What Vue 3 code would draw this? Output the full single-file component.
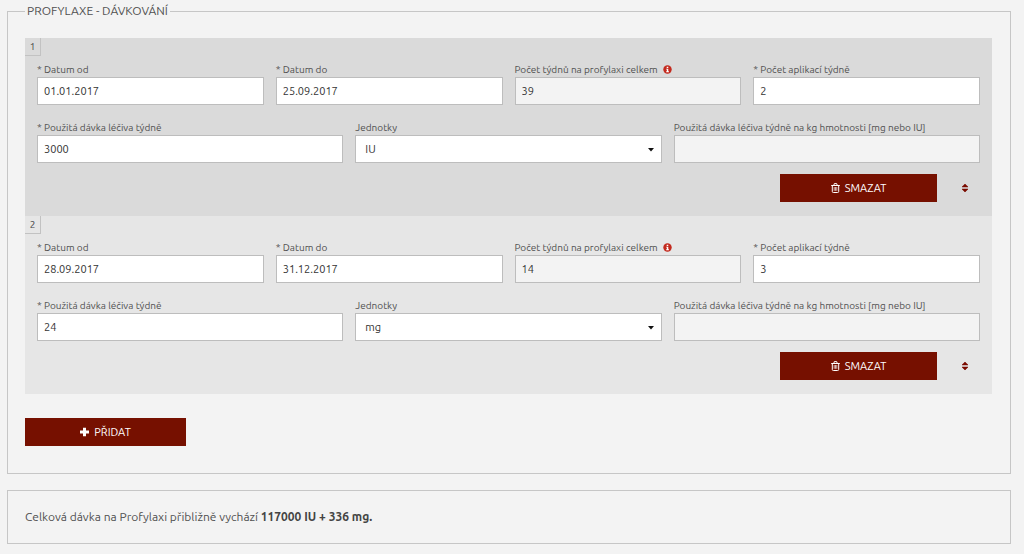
<script setup>
import { ref, computed } from 'vue'

const entries = ref([
  { id: 1, from: '01.01.2017', to: '25.09.2017', weeks: '39', perWeek: '2', dose: '3000', unit: 'IU', perKg: '' },
  { id: 2, from: '28.09.2017', to: '31.12.2017', weeks: '14', perWeek: '3', dose: '24', unit: 'mg', perKg: '' },
])

const total = computed(() =>
  ['IU', 'mg']
    .map((unit) => {
      const sum = entries.value
        .filter((e) => e.unit === unit)
        .reduce((acc, e) => acc + Number(e.weeks) * Number(e.dose), 0)
      return `${sum} ${unit}`
    })
    .join(' + ')
)

function remove(index) {
  entries.value.splice(index, 1)
}

function add() {
  entries.value.push({ id: Date.now(), from: '', to: '', weeks: '', perWeek: '', dose: '', unit: 'IU', perKg: '' })
}
</script>

<template>
  <main class="page">
    <fieldset class="panel">
      <legend>PROFYLAXE - DÁVKOVÁNÍ</legend>

      <section v-for="(entry, i) in entries" :key="entry.id" class="entry">
        <span class="index">{{ i + 1 }}</span>
        <div class="row four">
          <div class="field">
            <label :for="`from-${entry.id}`">* Datum od</label>
            <input :id="`from-${entry.id}`" v-model="entry.from" type="text" />
          </div>
          <div class="field">
            <label :for="`to-${entry.id}`">* Datum do</label>
            <input :id="`to-${entry.id}`" v-model="entry.to" type="text" />
          </div>
          <div class="field">
            <label :for="`weeks-${entry.id}`">
              Počet týdnů na profylaxi celkem
              <svg class="info" viewBox="0 0 16 16" aria-hidden="true">
                <circle cx="8" cy="8" r="7.5" fill="#c32a1e" />
                <path d="M6.6 3h2.8v2.3H6.6zM5.6 6.6h3.8v4.6h1.2v1.6H5.6v-1.6h1.2v-3H5.6z" fill="#fff" />
              </svg>
            </label>
            <input :id="`weeks-${entry.id}`" v-model="entry.weeks" type="text" readonly />
          </div>
          <div class="field">
            <label :for="`per-week-${entry.id}`">* Počet aplikací týdně</label>
            <input :id="`per-week-${entry.id}`" v-model="entry.perWeek" type="text" />
          </div>
        </div>
        <div class="row three">
          <div class="field">
            <label :for="`dose-${entry.id}`">* Použitá dávka léčiva týdně</label>
            <input :id="`dose-${entry.id}`" v-model="entry.dose" type="text" />
          </div>
          <div class="field">
            <label :for="`unit-${entry.id}`">Jednotky</label>
            <div class="select">
              <select :id="`unit-${entry.id}`" v-model="entry.unit">
                <option>IU</option>
                <option>mg</option>
              </select>
              <svg class="caret" viewBox="0 0 6 4" aria-hidden="true"><path d="M0 0h6L3 3.6z" fill="#111" /></svg>
            </div>
          </div>
          <div class="field">
            <label :for="`per-kg-${entry.id}`">Použitá dávka léčiva týdně na kg hmotnosti [mg nebo IU]</label>
            <input :id="`per-kg-${entry.id}`" v-model="entry.perKg" type="text" readonly />
          </div>
        </div>
        <div class="actions">
          <button type="button" class="btn delete" @click="remove(i)">
            <svg class="icon" viewBox="0 0 9 10" aria-hidden="true" fill="none" stroke="#fff">
              <path d="M.2 2.5h8.6M2.8 2.3L3.3.6h2.4l.5 1.7M1.3 2.6v5.9q0 1 1 1h4.4q1 0 1-1V2.6" />
              <path d="M3.2 4v3.8M4.5 4v3.8M5.8 4v3.8" stroke-width=".7" />
            </svg>
            SMAZAT
          </button>
          <button type="button" class="sort" aria-label="Přesunout">
            <svg viewBox="0 0 8 10" aria-hidden="true">
              <path d="M4 1L7 3.9H1zM1 6.1h6L4 9z" fill="#7a0c00" stroke="#7a0c00" stroke-width=".6" stroke-linejoin="round" />
            </svg>
          </button>
        </div>
      </section>

      <button type="button" class="btn add" @click="add">
        <svg class="icon" viewBox="0 0 9 10" aria-hidden="true"><path d="M3 .8h3v2.7h3v3H6v2.7H3V6.5H0v-3h3z" fill="#fff" /></svg>
        PŘIDAT
      </button>
    </fieldset>

    <p class="summary">Celková dávka na Profylaxi přibližně vychází <strong>{{ total }}.</strong></p>
  </main>
</template>

<style>
body {
  background: #f3f3f3;
}
</style>

<style scoped>
.page {
  padding: 3px 13px 9px 7px;
  font-family: Ubuntu, "Noto Sans", sans-serif;
  font-size: 10px;
  line-height: 14px;
  color: #505050;
}

.panel {
  min-width: 0;
  margin: 0;
  padding: 19px 18px 27px 17px;
  border: 1px solid #c6c6c6;
}

legend {
  padding: 0 2px;
  font-size: 12px;
  line-height: 16px;
}

.entry {
  position: relative;
  padding: 25px 12px 14px;
  background: #dadada;
}

.entry:nth-of-type(even) {
  background: #e6e6e6;
}

.index {
  position: absolute;
  top: 0;
  left: 0;
  box-sizing: border-box;
  width: 16px;
  height: 18px;
  border: solid #c2c2c2;
  border-width: 0 1px 1px 0;
  line-height: 18px;
  text-align: center;
  color: #444;
}

.row {
  display: grid;
  gap: 12px;
}

.four {
  grid-template-columns: repeat(4, minmax(0, 1fr));
  margin-bottom: 16px;
}

.three {
  grid-template-columns: repeat(3, minmax(0, 1fr));
}

.field {
  display: flex;
  flex-direction: column;
}

label {
  white-space: nowrap;
}

.info {
  width: 9px;
  height: 9px;
  margin-left: 3px;
  vertical-align: -1px;
}

input,
select {
  box-sizing: border-box;
  width: 100%;
  height: 28px;
  padding: 0 6px;
  border: 1px solid #bdbdbd;
  border-radius: 0;
  background: #fff;
  font: inherit;
  font-size: 11px;
  color: #333;
}

input:read-only {
  background: #f3f3f3;
}

.select {
  position: relative;
}

select {
  display: block;
  padding: 0 9px;
  appearance: none;
}

.caret {
  position: absolute;
  top: 13px;
  right: 8px;
  width: 6px;
  height: 4px;
  pointer-events: none;
}

.actions {
  display: flex;
  justify-content: flex-end;
  gap: 12px;
  margin-top: 11px;
}

.btn {
  display: flex;
  align-items: center;
  justify-content: center;
  gap: 5px;
  height: 28px;
  padding: 0;
  border: 0;
  background: #761000;
  font: inherit;
  font-size: 11px;
  color: #fff;
}

.delete {
  width: 157px;
}

.add {
  width: 161px;
  margin-top: 24px;
}

.icon {
  width: 9px;
  height: 10px;
}

.sort {
  display: grid;
  place-items: center;
  width: 31px;
  padding: 0;
  border: 0;
  background: none;
}

.sort svg {
  width: 8px;
  height: 10px;
}

.summary {
  margin: 16px 0 0;
  padding: 18px 17px;
  border: 1px solid #c6c6c6;
  font-size: 12px;
  line-height: 16px;
}

strong {
  color: #444;
}
</style>
